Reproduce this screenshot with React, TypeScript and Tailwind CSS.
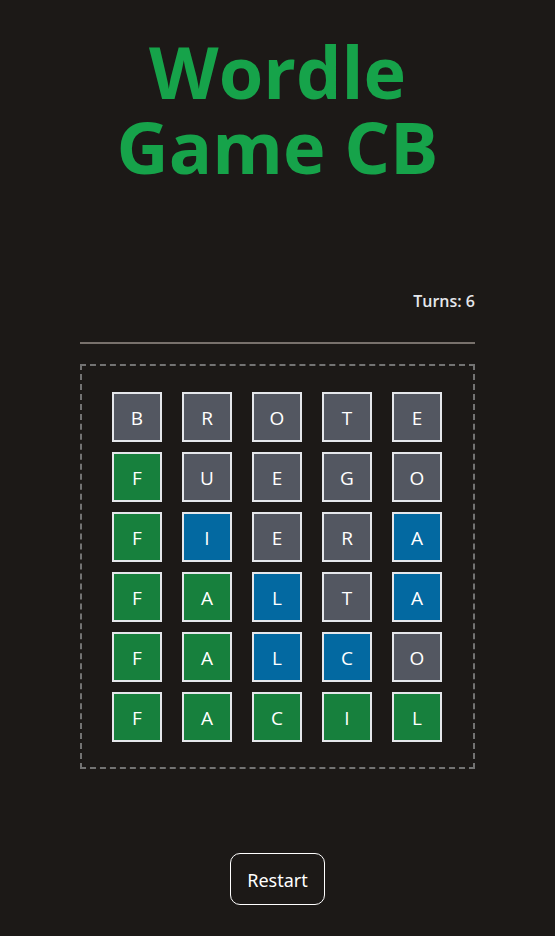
const rows = ["BROTE", "FUEGO", "FIERA", "FALTA", "FALCO", "FACIL"];
const marks = ["-----", "G----", "GB--B", "GGB-B", "GGBB-", "GGGGG"];
const colors: Record<string, string> = {
  "-": "bg-[#535761]",
  G: "bg-[#17803d]",
  B: "bg-[#0369a1]",
};

export default function App() {
  return (
    <main className="min-h-screen bg-[#1c1917] px-20 pt-[34px] pb-8 font-['Noto_Sans',sans-serif] text-white">
      <h1 className="text-center font-['Open_Sans',sans-serif] text-[72px] leading-[75px] font-bold text-[#16a34a]">
        Wordle Game CB
      </h1>
      <p className="mt-[105px] text-right font-['Open_Sans',sans-serif] text-base leading-6 font-semibold text-gray-200">
        Turns: 6
      </p>
      <hr className="mt-[29px] border-t-2 border-[#78716c]" />
      <section className="mt-5 flex flex-col items-center gap-2.5 border-2 border-dashed border-[#737373] pt-[26px] pr-px pb-[25px]">
        {rows.map((word, r) => (
          <div key={word} className="flex gap-5">
            {word.split("").map((letter, c) => (
              <span
                key={c}
                className={`flex size-[50px] items-center justify-center border-2 border-gray-200 pt-0.5 font-['Open_Sans',sans-serif] text-[19px] ${colors[marks[r][c]]}`}
              >
                {letter}
              </span>
            ))}
          </div>
        ))}
      </section>
      <div className="mt-[84px] flex justify-center">
        <button className="h-[52px] rounded-[10px] border border-white px-4 pt-0.5 text-lg">
          Restart
        </button>
      </div>
    </main>
  );
}
